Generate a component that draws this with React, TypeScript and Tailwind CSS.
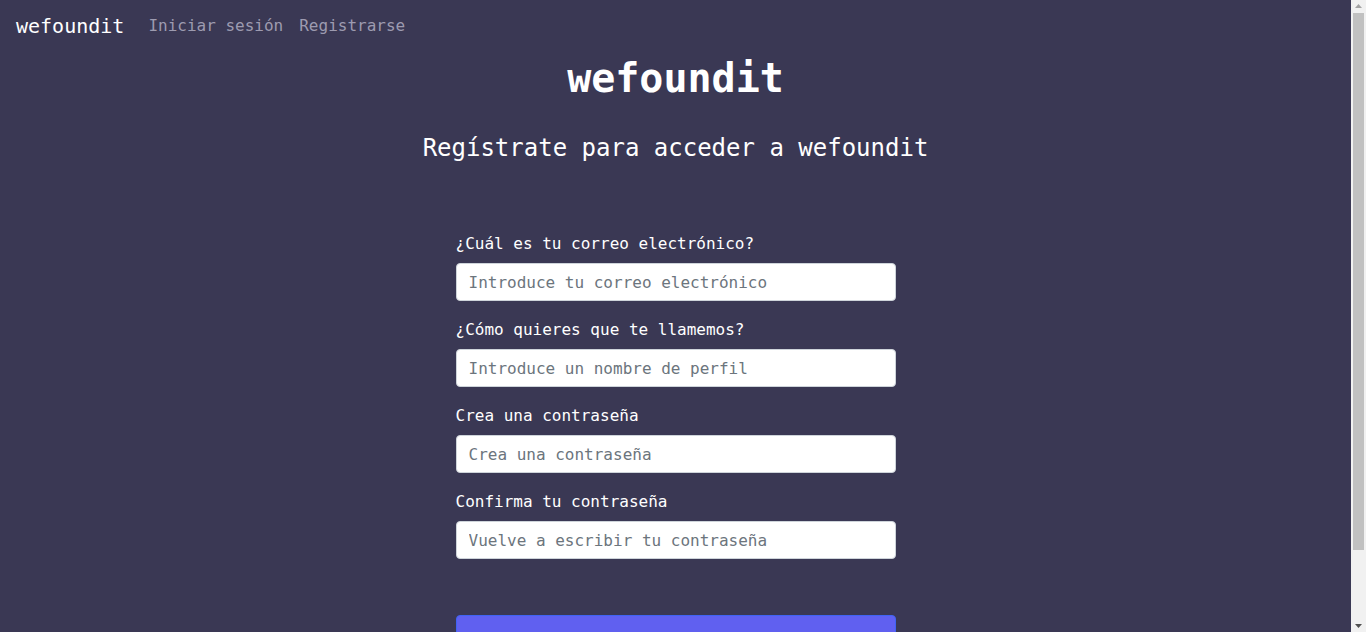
import React from "react";

const fields = [
  {
    id: "email",
    label: "¿Cuál es tu correo electrónico?",
    placeholder: "Introduce tu correo electrónico",
    type: "email",
  },
  {
    id: "username",
    label: "¿Cómo quieres que te llamemos?",
    placeholder: "Introduce un nombre de perfil",
    type: "text",
  },
  {
    id: "password",
    label: "Crea una contraseña",
    placeholder: "Crea una contraseña",
    type: "password",
  },
  {
    id: "password2",
    label: "Confirma tu contraseña",
    placeholder: "Vuelve a escribir tu contraseña",
    type: "password",
  },
];

const Navbar = () => {
  return (
    <nav className="h-[50px] pt-[2px] flex items-center px-4">
      <a href="#" className="text-[20px] leading-[30px] text-white mr-4">
        wefoundit
      </a>
      <div className="flex items-center">
        <a href="#" className="px-2 text-base leading-6 text-[#9d9bb0]">
          Iniciar sesión
        </a>
        <a href="#" className="px-2 text-base leading-6 text-[#9d9bb0]">
          Registrarse
        </a>
      </div>
    </nav>
  );
};

// classic window scrollbar as seen in the screenshot
const Scrollbar = () => {
  return (
    <div className="fixed right-0 top-0 h-[632px] w-[15px] bg-[#f1f1f1] flex flex-col items-center">
      <svg width="15" height="12" viewBox="0 0 15 12" className="shrink-0">
        <path d="M4 8 L7.5 4 L11 8 Z" fill="#a3a3a3" />
      </svg>
      <div className="mt-[1px] h-[537px] w-[11px] bg-[#c1c1c1]" />
      <div className="flex-1" />
      <svg width="15" height="12" viewBox="0 0 15 12" className="shrink-0">
        <path d="M4 4 L11 4 L7.5 8 Z" fill="#505050" />
      </svg>
    </div>
  );
};

export default function App() {
  return (
    <div className="bg-[#3a3854] pr-[15px] text-white font-['DejaVu_Sans_Mono',monospace]">
      <Navbar />

      <main className="flex flex-col items-center">
        <h1 className="mt-[4px] text-[40px] leading-[48px] font-bold">wefoundit</h1>
        <h2 className="mt-[30px] text-[24px] leading-[32px]">
          Regístrate para acceder a wefoundit
        </h2>

        <form className="w-[440px] mt-[67px] mb-[51px] flex flex-col">
          {fields.map((f) => (
            <div key={f.id} className="mb-4 flex flex-col">
              <label htmlFor={f.id} className="pt-px text-base leading-6 mb-[7px]">
                {f.label}
              </label>
              <input
                id={f.id}
                type={f.type}
                placeholder={f.placeholder}
                className="h-[38px] w-full rounded-[4px] border border-[#ced4da] bg-white px-3 text-base text-[#212529] placeholder:text-[#6c757d] outline-none"
              />
            </div>
          ))}

          <button
            type="submit"
            className="mt-10 w-full rounded-[4px] border border-[#3f63f4] bg-[#6060f0] py-3 text-base leading-6 text-white"
          >
            Registrarse
          </button>
        </form>
      </main>

      <Scrollbar />
    </div>
  );
}
